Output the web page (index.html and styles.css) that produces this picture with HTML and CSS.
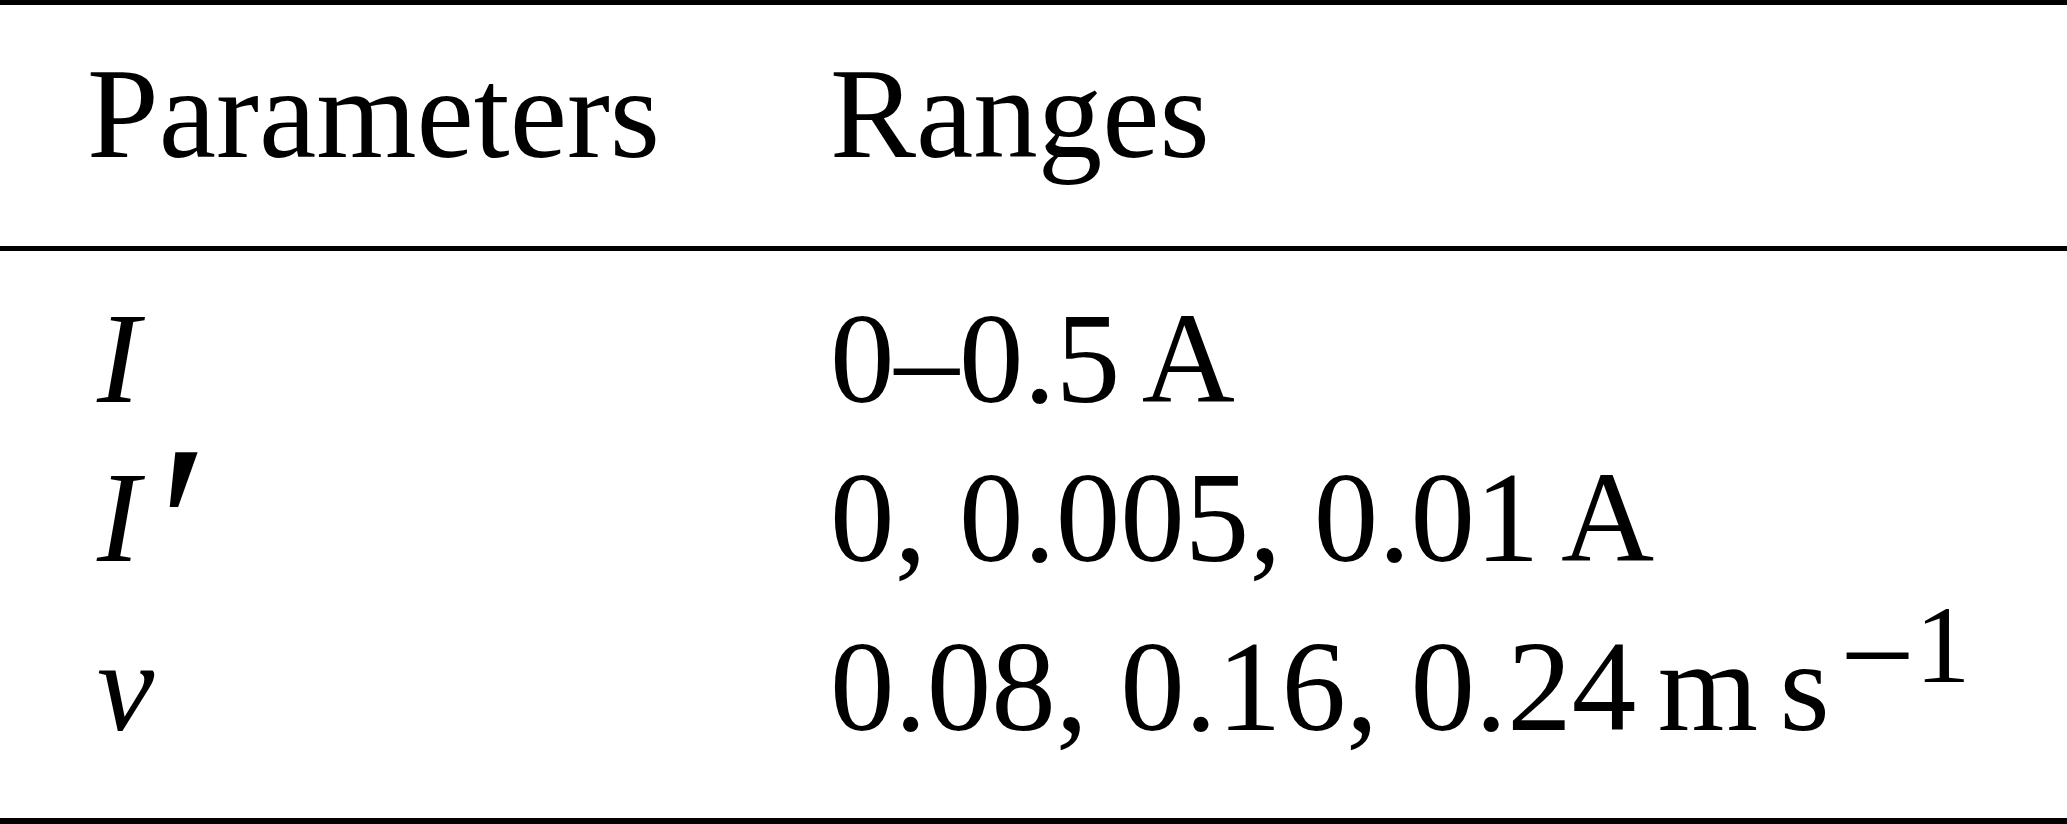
FILE: index.html
```html
<!DOCTYPE html>
<html lang="en">
<head>
<meta charset="utf-8">
<title>Parameters and ranges</title>
<link rel="stylesheet" href="styles.css">
</head>
<body>
<div class="tbl">
  <div class="row head">
    <div class="cell c1">Parameters</div>
    <div class="cell c2">Ranges</div>
  </div>
  <div class="body">
    <div class="row r1">
      <div class="cell c1"><i class="sym">I</i></div>
      <div class="cell c2">0–0.5<span class="th"></span>A</div>
    </div>
    <div class="row r2">
      <div class="cell c1"><i class="sym">I</i><span class="prime">′</span></div>
      <div class="cell c2">0, 0.005, 0.01<span class="th"></span>A</div>
    </div>
    <div class="row r3">
      <div class="cell c1"><i class="sym">v</i></div>
      <div class="cell c2">0.08, 0.16, 0.24<span class="th"></span>m<span class="th"></span>s<sup class="sup"><span class="minus">−</span>1</sup></div>
    </div>
  </div>
</div>
</body>
</html>
```
FILE: styles.css
```css
html, body {
  margin: 0;
  padding: 0;
  background: #ffffff;
}
body {
  font-family: "Liberation Serif", "Times New Roman", serif;
  font-size: 129px;
  line-height: 1;
  color: #000000;
}
.tbl {
  border-top: 5px solid #000000;
  border-bottom: 6px solid #000000;
}
.row {
  display: grid;
  grid-template-columns: 743px 1fr;
  padding-left: 87px;
}
.head {
  padding-top: 44px;
  padding-bottom: 68px;
  border-bottom: 5px solid #000000;
}
.body {
  display: flex;
  flex-direction: column;
  padding-top: 43px;
  padding-bottom: 67px;
}
.r2 {
  margin-top: 30px;
}
.r3 {
  margin-top: 40px;
}
.cell {
  white-space: nowrap;
}
.sym {
  font-style: italic;
  margin-left: 10px;
}
.prime {
  font-style: italic;
  font-size: 1.8em;
  line-height: 0;
  vertical-align: -44px;
  margin-left: 4px;
}
.th {
  display: inline-block;
  width: 0.1667em;
}
.sup {
  font-size: 0.86em;
  line-height: 0;
  vertical-align: 48px;
  margin-left: 10px;
}
.minus {
  font-size: 1.2em;
  vertical-align: -18px;
}
```
